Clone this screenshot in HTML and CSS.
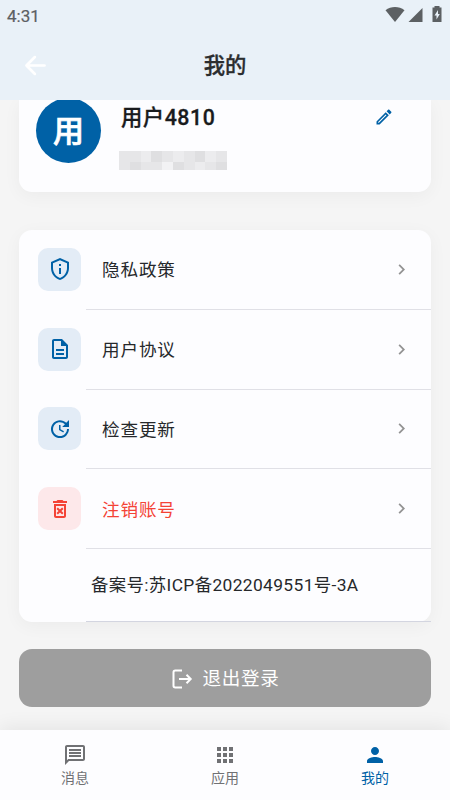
FILE: index.html
```html
<!DOCTYPE html>
<html lang="zh-CN">
<head>
<meta charset="utf-8">
<meta name="viewport" content="width=device-width, initial-scale=1">
<title>我的</title>
<link rel="stylesheet" href="styles.css">
</head>
<body>
<div class="screen">
  <header class="top">
    <div class="status">
      <span class="time">4:31</span>
      <svg class="status-icons" width="58" height="18" viewBox="0 0 58 18"><path d="M.5 4.200C6-.1 14-.1 19.500 4.200L10 16z"/><path d="M37.500 2v14h-14z"/><path fill-rule="evenodd" d="M49.500 0h5v1.500h2V16h-9V1.500h2zM53 4l-3.500 5.500h2v4l3.300-5.400H53z"/></svg>
    </div>
    <div class="appbar">
      <svg class="back" width="29" height="29" viewBox="0 0 24 24"><path d="M19.500 12H5M11.500 5L4.500 12l7 7"/></svg>
      <h1>我的</h1>
    </div>
  </header>
  <main class="content">
    <section class="card profile">
      <div class="avatar">用</div>
      <div class="who">
        <div class="name">用户4810</div>
        <div class="mask"><i></i><i></i><i></i><i></i><i></i><i></i><i></i><i></i><i></i><i></i><i></i><i></i><i></i><i></i><i></i><i></i><i></i><i></i><i></i><i></i></div>
      </div>
      <svg class="edit" width="20" height="20" viewBox="0 0 24 24"><path d="M14.060 9.020l.92.92L5.920 19H5v-.92l9.060-9.060M17.660 3c-.25 0-.51.1-.7.29l-1.830 1.830 3.750 3.750 1.830-1.830c.39-.39.39-1.020 0-1.410l-2.340-2.340c-.2-.2-.45-.29-.71-.29zm-3.600 3.190L3 17.250V21h3.750L17.810 9.940l-3.750-3.750z"/></svg>
    </section>
    <section class="card menu">
      <div class="row">
        <span class="tile"><svg width="24" height="24" viewBox="0 0 24 24"><path d="M12 1L3 5v6c0 5.550 3.840 10.740 9 12 5.160-1.260 9-6.450 9-12V5zm0 2.190l7 3.110V11c0 4.520-2.980 8.690-7 9.930C7.980 19.690 5 15.520 5 11V6.300zM11 7h2v2h-2zm0 4h2v6h-2z"/></svg></span>
        <span class="label">隐私政策</span><svg class="chev" width="21" height="21" viewBox="0 0 24 24"><path d="M10 6L8.590 7.410 13.170 12l-4.580 4.590L10 18l6-6z"/></svg>
      </div>
      <div class="row">
        <span class="tile"><svg width="24" height="24" viewBox="0 0 24 24"><path d="M8 16h8v2H8zm0-4h8v2H8zm6-10H6c-1.100 0-2 .9-2 2v16c0 1.100.89 2 1.990 2H18c1.100 0 2-.9 2-2V8zm4 18H6V4h7v5h5z"/></svg></span>
        <span class="label">用户协议</span><svg class="chev" width="21" height="21" viewBox="0 0 24 24"><path d="M10 6L8.590 7.410 13.170 12l-4.580 4.590L10 18l6-6z"/></svg>
      </div>
      <div class="row">
        <span class="tile"><svg width="24" height="24" viewBox="0 0 24 24"><path d="M21 10.120h-6.780l2.740-2.820c-2.730-2.700-7.150-2.800-9.880-.1-2.730 2.710-2.730 7.080 0 9.790s7.150 2.710 9.880 0C18.320 15.650 19 14.080 19 12.100h2c0 1.980-.88 4.550-2.640 6.290-3.510 3.480-9.210 3.480-12.720 0-3.500-3.470-3.530-9.110-.02-12.580s9.140-3.470 12.650 0L21 3zM12.500 8v4.250l3.500 2.080-.72 1.210L11 13V8z"/></svg></span>
        <span class="label">检查更新</span><svg class="chev" width="21" height="21" viewBox="0 0 24 24"><path d="M10 6L8.590 7.410 13.170 12l-4.580 4.590L10 18l6-6z"/></svg>
      </div>
      <div class="row danger">
        <span class="tile"><svg width="24" height="24" viewBox="0 0 24 24"><path d="M14.120 10.470L12 12.590l-2.130-2.120-1.410 1.410L10.590 14l-2.120 2.120 1.410 1.410L12 15.410l2.120 2.120 1.410-1.410L13.410 14l2.120-2.120zM15.500 4l-1-1h-5l-1 1H5v2h14V4zM6 19c0 1.100.9 2 2 2h8c1.100 0 2-.9 2-2V7H6zM8 9h8v10H8z"/></svg></span>
        <span class="label">注销账号</span><svg class="chev" width="21" height="21" viewBox="0 0 24 24"><path d="M10 6L8.590 7.410 13.170 12l-4.580 4.590L10 18l6-6z"/></svg>
      </div>
      <div class="record"><span>备案号:苏ICP备2022049551号-3A</span></div>
    </section>
    <button class="logout"><svg width="22" height="22" viewBox="0 0 22 22"><path d="M11 2.500H4.200Q2.500 2.500 2.500 4.200v13.600q0 1.700 1.700 1.700H11M8 11h11M15.500 6.800l4.200 4.200-4.200 4.200"/></svg><span>退出登录</span></button>
  </main>
  <nav class="tabs">
    <a class="tab"><svg width="24" height="24" viewBox="0 0 24 24"><path d="M4 4h16v12H5.170L4 17.170zm0-2c-1.100 0-1.990.9-1.990 2L2 22l4-4h14c1.100 0 2-.9 2-2V4c0-1.100-.9-2-2-2zm2 10h12v2H6zm0-3h12v2H6zm0-3h12v2H6z"/></svg><span>消息</span></a>
    <a class="tab"><svg width="24" height="24" viewBox="0 0 24 24"><path d="M4 8h4V4H4zm6 12h4v-4h-4zm-6 0h4v-4H4zm0-6h4v-4H4zm6 0h4v-4h-4zm6-10v4h4V4zm-6 4h4V4h-4zm6 6h4v-4h-4zm0 6h4v-4h-4z"/></svg><span>应用</span></a>
    <a class="tab active"><svg width="24" height="24" viewBox="0 0 24 24"><path d="M12 12c2.210 0 4-1.790 4-4s-1.790-4-4-4-4 1.790-4 4 1.790 4 4 4zm0 2c-2.670 0-8 1.340-8 4v2h16v-2c0-2.660-5.330-4-8-4z"/></svg><span>我的</span></a>
  </nav>
</div>
</body>
</html>
```
FILE: styles.css
```css
* { box-sizing: border-box; }
body { margin: 0; font-family: Roboto, "Noto Sans CJK SC", sans-serif; color: #26282b; }
svg { display: block; flex: none; fill: currentColor; }
.screen { width: 450px; height: 800px; display: flex; flex-direction: column; background: #f5f5f5; overflow: hidden; }
.top { height: 99.500px; flex: none; background: #e9f1f8; }
.status { height: 31px; display: flex; justify-content: space-between; padding: 6px 8px 0 7px; color: #5c6063; }
.time { font-size: 17px; line-height: 20px; font-weight: 400; -webkit-text-stroke: .2px; }
.status-icons { margin-right: -1px; }
.appbar { height: 68px; display: grid; grid-template-columns: 69px 1fr 69px; align-items: center; }
.back { margin-left: 21px; fill: none; stroke: #fff; stroke-width: 2.200; stroke-linecap: round; stroke-linejoin: round; }
.appbar h1 { margin: 2px 0 0; text-align: center; font-size: 21.300px; line-height: 30px; font-weight: 500; color: #2b2d2f; -webkit-text-stroke: .3px; }
.content { flex: 1; min-height: 0; overflow: hidden; padding: 0 19px; }
.card { background: #fdfdff; border-radius: 13px; box-shadow: 0 4px 18px rgba(0, 0, 0, .045); }
.profile { height: 92px; border-radius: 0 0 13px 13px; display: flex; }
.avatar { flex: none; width: 65px; height: 65px; margin: -2px 0 0 17px; border-radius: 50%; background: #0061a6; color: #fff; font-size: 31px; font-weight: 500; line-height: 67px; text-align: center; -webkit-text-stroke: .7px; }
.who { flex: 1; padding: 3.500px 0 0 20px; }
.name { font-size: 21.300px; line-height: 30px; font-weight: 500; letter-spacing: .55px; color: #191b1d; -webkit-text-stroke: .3px; }
.mask { width: 108px; height: 19px; margin: 18px 0 0 -2px; display: grid; grid-template-columns: repeat(10, 1fr); grid-template-rows: 11px 8px; }
.mask i { background: #e6e6e8; }
.mask i:nth-child(3n) { background: #ececee; }
.mask i:nth-child(4n) { background: #dfdfe1; }
.mask i:nth-child(15) { background: #f2f2f4; }
.edit { margin: 7.500px 37px 0 0; color: #0061a6; }
.menu { margin-top: 38.500px; height: 392px; }
.row { height: 79.750px; display: grid; grid-template-columns: 43px 1fr 21px; grid-template-rows: 78.750px 1px; align-items: center; padding: 0 19px; }
.row::after { content: ""; height: 1px; grid-column: 1 / -1; margin: 0 -19px 0 48px; background: #e0e0e6; }
.tile { width: 43px; height: 43px; border-radius: 10px; background: #e3ecf6; color: #0061a6; display: grid; place-items: center; }
.label { margin-left: 21px; font-size: 17.600px; letter-spacing: .85px; line-height: 26px; padding-top: 2px; }
.chev { color: #929292; margin-left: -.5px; }
.danger .tile { background: #fde8ea; color: #f44336; }
.danger .label { color: #f44336; }
.record { height: 73px; margin-left: 67px; padding: 0 0 3px 5px; display: flex; align-items: center; border-bottom: 1px solid #d3d5e0; font-size: 17.400px; letter-spacing: .36px; white-space: nowrap; }
.logout { margin: 27px 0 0; width: 412px; height: 58px; border: 0; border-radius: 13px; background: #9e9e9e; color: #fff; display: flex; align-items: center; justify-content: center; gap: 10px; font: 400 18.600px/28px Roboto, "Noto Sans CJK SC", sans-serif; letter-spacing: .6px; padding: 1px 0 0; }
.logout svg { fill: none; stroke: #fff; stroke-width: 2; }
.tabs { flex: none; height: 70px; background: #fdfdff; display: grid; grid-template-columns: repeat(3, 1fr); box-shadow: 0 -3px 18px rgba(0, 0, 0, .07); }
.tab { display: flex; flex-direction: column; align-items: center; padding-top: 13px; font-size: 14px; line-height: 21px; color: #707174; }
.tab span { margin-top: 1px; }
.active { color: #0061a6; }
```
